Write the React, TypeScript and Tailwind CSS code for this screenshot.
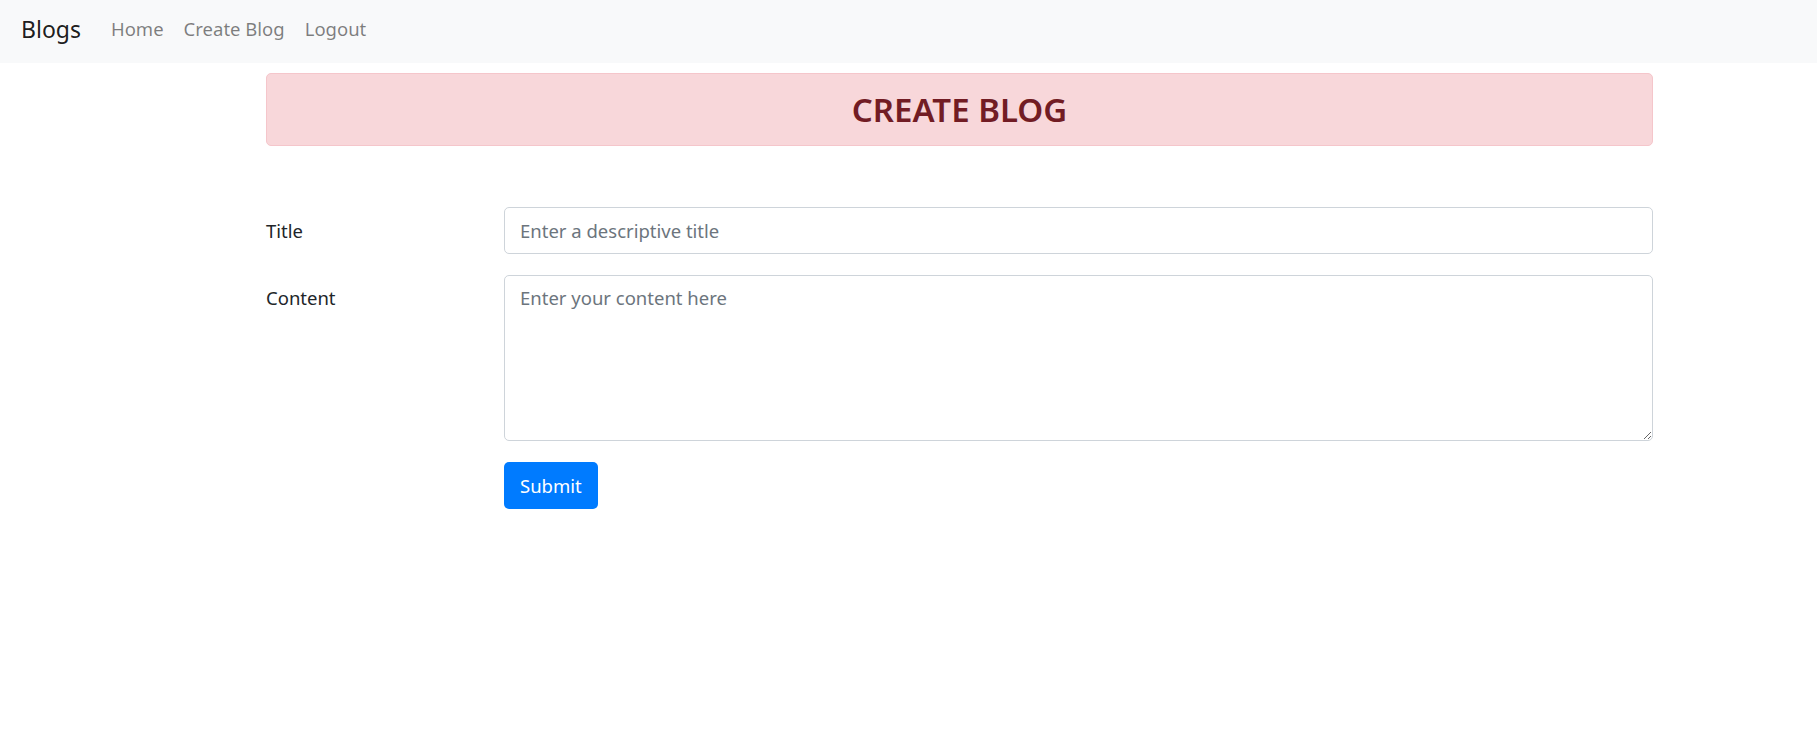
import React from 'react';

const App: React.FC = () => {
  return (
    <div className="min-h-screen bg-white text-[#212529] font-['Noto_Sans',sans-serif]">
      {/* Navbar */}
      <nav className="h-[63px] bg-[#f8f9fa] flex items-center px-[21px] pb-[5px]">
        <a href="#" className="text-[23px] text-black/90 mr-[30px] leading-none">Blogs</a>
        <div className="flex gap-[20px] text-[18.5px] text-black/50 leading-none">
          <a href="#">Home</a>
          <a href="#">Create Blog</a>
          <a href="#">Logout</a>
        </div>
      </nav>

      <main className="ml-[266px] mr-[164px] pt-[10px]">
        {/* Header alert */}
        <div className="h-[73px] bg-[#f8d7da] border border-[#f5c6cb] rounded-[5px] flex items-center justify-center">
          <h3 className="text-[33px] font-semibold text-[#721c24] leading-none">CREATE BLOG</h3>
        </div>

        {/* Form */}
        <form className="mt-[61px] flex flex-col gap-[21px]">
          <div className="flex items-center">
            <label className="w-[238px] shrink-0 text-[18.5px]">Title</label>
            <input
              type="text"
              placeholder="Enter a descriptive title"
              className="flex-1 h-[47px] px-[15px] text-[18.5px] border border-[#ced4da] rounded-[5px] placeholder:text-[#6c757d] outline-none"
            />
          </div>
          <div className="flex items-start">
            <label className="w-[238px] shrink-0 text-[18.5px] pt-[9px]">Content</label>
            <textarea
              placeholder="Enter your content here"
              className="flex-1 h-[166px] px-[15px] py-[8px] text-[18.5px] border border-[#ced4da] rounded-[5px] placeholder:text-[#6c757d] outline-none"
            />
          </div>
          <div className="flex">
            <div className="w-[238px] shrink-0" />
            <button
              type="button"
              className="h-[47px] px-[16px] bg-[#007bff] text-white text-[18.5px] rounded-[5px]"
            >
              Submit
            </button>
          </div>
        </form>
      </main>
    </div>
  );
};

export default App;
